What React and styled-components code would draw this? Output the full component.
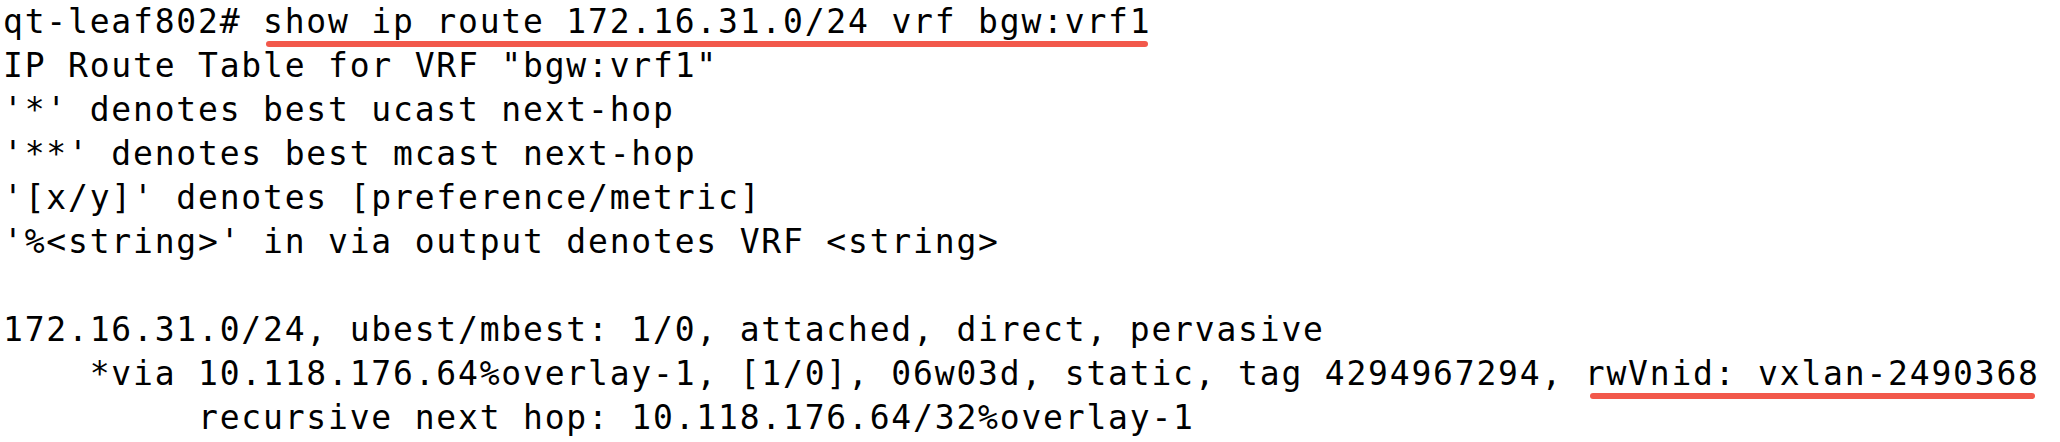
import React from 'react';
import styled, { createGlobalStyle } from 'styled-components';

const GlobalStyle = createGlobalStyle`
  html, body {
    margin: 0;
    padding: 0;
    background: #ffffff;
  }
`;

const Terminal = styled.div`
  padding: 0 0 0 3px;
  font-family: "DejaVu Sans Mono", "Liberation Mono", monospace;
  font-size: 33px;
  letter-spacing: 1.8px;
  line-height: 44px;
  color: #000000;
  background: #ffffff;
  white-space: pre;
`;

const Line = styled.div`
  height: 44px;
`;

const Mark = styled.span`
  position: relative;

  &::after {
    content: '';
    position: absolute;
    left: ${p => p.$inset}px;
    right: ${p => p.$inset}px;
    bottom: -6px;
    height: 6px;
    border-radius: 3px;
    background: #f2584b;
  }
`;

const lines = [
  'IP Route Table for VRF "bgw:vrf1"',
  "'*' denotes best ucast next-hop",
  "'**' denotes best mcast next-hop",
  "'[x/y]' denotes [preference/metric]",
  "'%<string>' in via output denotes VRF <string>",
  '',
  '172.16.31.0/24, ubest/mbest: 1/0, attached, direct, pervasive',
];

export default function App() {
  return (
    <>
      <GlobalStyle />
      <Terminal>
        <Line>
          qt-leaf802# <Mark $inset={3}>show ip route 172.16.31.0/24 vrf bgw:vrf1</Mark>
        </Line>
        {lines.map((text, i) => (
          <Line key={i}>{text}</Line>
        ))}
        <Line>
          {'    *via 10.118.176.64%overlay-1, [1/0], 06w03d, static, tag 4294967294, '}
          <Mark $inset={5}>rwVnid: vxlan-2490368</Mark>
        </Line>
        <Line>{'         recursive next hop: 10.118.176.64/32%overlay-1'}</Line>
      </Terminal>
    </>
  );
}
